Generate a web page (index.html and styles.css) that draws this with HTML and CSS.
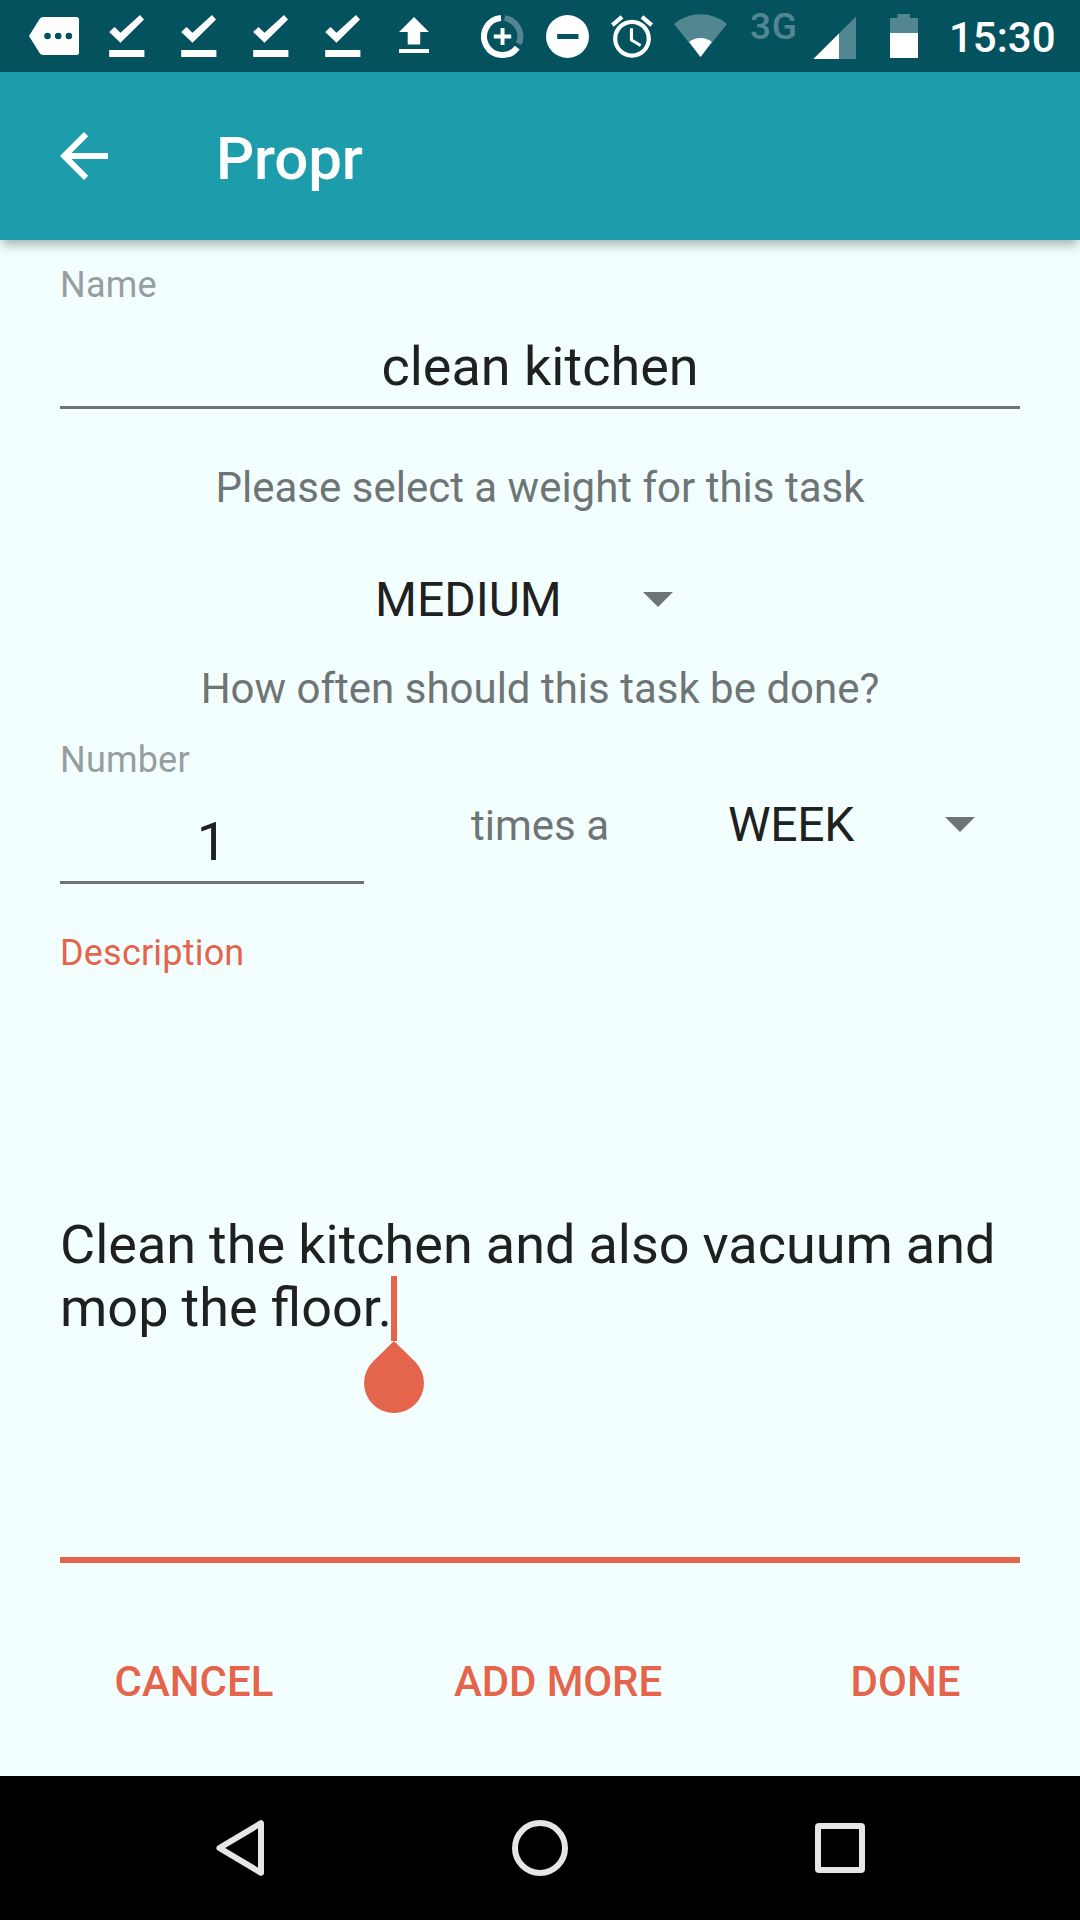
FILE: index.html
```html
<!DOCTYPE html>
<html lang="en">
<head>
<meta charset="utf-8">
<title>Propr</title>
<link rel="stylesheet" href="styles.css">
</head>
<body>
<svg class="defs" width="0" height="0" aria-hidden="true">
  <symbol id="check" viewBox="109 15 36 42">
    <path d="M109.2 32l5.3-5 6 5.8L140 15l4 4.4-23.5 23.4zM109.2 50h35.2v7h-35.2z"/>
  </symbol>
</svg>
<header class="status">
  <svg class="tag" viewBox="29 17 50 38" width="50" height="38"><path fill-rule="evenodd" d="M29 36L39.6 19q1.3-2 3.400-2H76.500Q79 17 79 19.500V52.500Q79 55 76.500 55H43q-2.100 0-3.400-2zM44.200 36a3.300 3.300 0 1 0 6.600 0a3.300 3.300 0 1 0-6.600 0M54.900 36a3.300 3.300 0 1 0 6.600 0a3.300 3.300 0 1 0-6.600 0M65.600 36a3.300 3.300 0 1 0 6.600 0a3.300 3.300 0 1 0-6.600 0"/></svg>
  <div class="checks">
    <svg width="36" height="42"><use href="#check"/></svg>
    <svg width="36" height="42"><use href="#check"/></svg>
    <svg width="36" height="42"><use href="#check"/></svg>
    <svg width="36" height="42"><use href="#check"/></svg>
  </div>
  <svg class="upload" viewBox="399 17 30 36" width="30" height="36"><path d="M414 17l15 15h-8.800v12.500h-12.500V32H399zM399 49h30v4h-30z"/></svg>
  <svg class="saver" viewBox="481 15 43 43" width="43" height="43">
    <g fill="none" stroke="#fff" stroke-width="6"><path d="M501 18.060A18.500 18.500 0 1 0 517.300 47.600"/><path class="faded-line" d="M504.700 18.130A18.500 18.500 0 0 1 518.800 43.700"/></g>
    <path d="M500.600 28h3.900v6.600h6.700v3.800h-6.700V45h-3.900v-6.600h-6.800v-3.800h6.800z"/>
  </svg>
  <svg class="dnd" viewBox="545.700 15 43 43" width="43" height="43"><path fill-rule="evenodd" d="M545.700 36.500a21.500 21.500 0 1 0 43 0a21.500 21.500 0 1 0-43 0M556.900 34h21.300v5h-21.300z"/></svg>
  <svg class="alarm" viewBox="2 1.860 20 20.140" width="42" height="43"><path d="M22 5.720l-4.600-3.860-1.290 1.530 4.600 3.860L22 5.720zM7.880 3.390L6.600 1.860 2 5.710l1.290 1.530 4.590-3.850zM12.500 8H11v6l4.750 2.850.75-1.230-4-2.370V8zM12 4c-4.970 0-9 4.030-9 9s4.020 9 9 9c4.970 0 9-4.030 9-9s-4.030-9-9-9zm0 16c-3.870 0-7-3.130-7-7s3.130-7 7-7 7 3.130 7 7-3.130 7-7 7z"/></svg>
  <svg class="wifi" viewBox="674 14 53 43" width="53" height="43"><path class="faded" d="M700.500 57L674 24Q685.500 14.300 700.500 14.300T727 24z"/><path d="M700.500 57L689.200 42Q694 38 700.500 38T711.800 42z"/></svg>
  <span class="network">3G</span>
  <svg class="signal" viewBox="813 16 43 43" width="43" height="43"><path class="faded" d="M856 16.500V59H813.400z"/><path d="M839 33.500V59H813.400z"/></svg>
  <svg class="battery" viewBox="890 14 28 44" width="28" height="44"><path class="faded" d="M890 33V18h7.500v-4H910v4h8v15z"/><path d="M890 33h28v25h-28z"/></svg>
  <time class="clock">15:30</time>
</header>
<div class="appbar">
  <svg viewBox="0 0 24 24" width="72" height="72"><path d="M20 11H7.830l5.590-5.590L12 4l-8 8 8 8 1.410-1.410L7.830 13H20v-2z"/></svg>
  <h1>Propr</h1>
</div>
<main class="form">
  <div class="field name">
    <label>Name</label>
    <div class="value">clean kitchen</div>
  </div>
  <p class="prompt weight">Please select a weight for this task</p>
  <div class="spinner medium"><span>MEDIUM</span><i class="caret"></i></div>
  <p class="prompt often">How often should this task be done?</p>
  <div class="frequency">
    <div class="field number">
      <label>Number</label>
      <div class="value">1</div>
    </div>
    <p class="times">times a</p>
    <div class="spinner week"><span>WEEK</span><i class="caret"></i></div>
  </div>
  <div class="field description">
    <label>Description</label>
    <div class="value">Clean the kitchen and also vacuum and mop the floor.<span class="cursor"><svg viewBox="0 0 60 72" width="60" height="72"><path d="M30 0L51.200 20.800A30 30 0 1 1 8.800 20.800z"/></svg></span></div>
  </div>
  <div class="actions"><button>CANCEL</button><button class="more">ADD MORE</button><button>DONE</button></div>
</main>
<nav class="navbar">
  <svg viewBox="216 1820 48 56" width="48" height="56"><path d="M219.400 1848L261 1823.200v49.600z"/></svg>
  <svg viewBox="512 1820 56 56" width="56" height="56"><circle cx="540" cy="1848" r="25"/></svg>
  <svg viewBox="815 1823 50 50" width="50" height="50"><rect x="818" y="1826" width="44" height="44" rx="1"/></svg>
</nav>
</body>
</html>
```
FILE: styles.css
```css
* { box-sizing: border-box; }
body {
  margin: 0;
  width: 1080px;
  height: 1920px;
  display: flex;
  flex-direction: column;
  background: #f3ffff;
  color: #1f2121;
  font-family: Roboto, sans-serif;
  overflow: hidden;
}
h1, p { margin: 0; font-weight: 400; }
svg { display: block; flex: none; }
.defs { position: absolute; }

.status {
  flex: none;
  height: 72px;
  display: flex;
  align-items: flex-start;
  padding-left: 29px;
  background: #05525f;
  color: #fff;
  fill: #fff;
}
.faded { fill: #528691; }
.faded-line { stroke: #528691; }
.tag { margin-top: 17px; }
.checks { display: flex; gap: 36px; margin: 15px 0 0 30px; }
.upload { margin: 17px 0 0 38px; }
.saver { margin: 15px 0 0 52px; }
.dnd { margin: 15px 0 0 22px; }
.alarm { margin: 15px 0 0 22px; }
.wifi { margin: 14px 0 0 21px; }
.network {
  width: 64px;
  margin: 5px 0 0 23px;
  font-size: 37px;
  line-height: 43px;
  font-weight: 500;
  letter-spacing: .8px;
  color: #528691;
}
.signal { margin: 16px 0 0 -1px; }
.battery { margin: 14px 0 0 34px; }
.clock {
  margin: 13px 0 0 31px;
  font-size: 42px;
  line-height: 49px;
  font-weight: 500;
}

.appbar {
  flex: none;
  height: 168px;
  display: flex;
  align-items: flex-start;
  gap: 96px;
  padding: 48px;
  background: #1d9cab;
  color: #fff;
  fill: #fff;
  box-shadow: 0 7px 10px -2px rgba(0, 0, 0, .3);
}
.appbar h1 { margin-top: 3px; font-size: 60px; line-height: 71px; font-weight: 500; letter-spacing: -.2px; }

.form { height: 1536px; padding: 24px 60px 0; }
.field label { display: block; font-size: 36px; line-height: 42px; letter-spacing: .2px; color: #979e9e; }
.field .value {
  font-size: 54px;
  line-height: 63px;
  padding-bottom: 8px;
  text-align: center;
  border-bottom: 3px solid #6f7575;
}
.name .value { margin-top: 29px; }
.prompt, .times { font-size: 42px; line-height: 49px; color: #6f7575; text-align: center; }
.weight { margin-top: 54px; }
.spinner { display: flex; align-items: center; font-size: 48px; line-height: 57px; }
.caret {
  border: solid transparent;
  border-width: 15px 15px 0;
  border-top-color: #6f7575;
}
.medium { margin: 59px 0 0 315px; }
.medium span { width: 268px; }
.often { margin-top: 36px; }
.frequency { display: flex; align-items: flex-start; margin-top: 26px; }
.number { width: 304px; }
.number .value { margin-top: 29px; }
.times { width: 258px; margin: 62px 0 0 47px; }
.week { margin: 57px 0 0 59px; }
.week span { width: 217px; letter-spacing: -.3px; }
.description { margin-top: 48px; }
.description label { color: #e5644c; }
.description .value {
  height: 350px;
  margin-top: 239px;
  padding: 0;
  text-align: left;
  word-spacing: -.4px;
  border-bottom: 6px solid #e5644c;
}
.cursor { position: relative; }
.cursor::before {
  content: "";
  position: absolute;
  left: -1px;
  top: 0;
  width: 6px;
  height: 65px;
  background: #e5644c;
}
.cursor svg { position: absolute; left: -28px; top: 65px; fill: #e5644c; }
.actions { display: grid; grid-template-columns: 268px 460px 235px; margin-top: 94px; }
.actions button {
  padding: 0;
  border: 0;
  background: none;
  color: #e5644c;
  font: 500 42px/49px Roboto, sans-serif;
}
.actions .more { letter-spacing: -.1px; }

.navbar {
  flex: none;
  height: 144px;
  display: flex;
  align-items: center;
  justify-content: space-between;
  padding: 0 215px 0 216px;
  background: #000;
}
.navbar svg { fill: none; stroke: #e6e6e6; stroke-width: 6; stroke-linejoin: round; }
```
